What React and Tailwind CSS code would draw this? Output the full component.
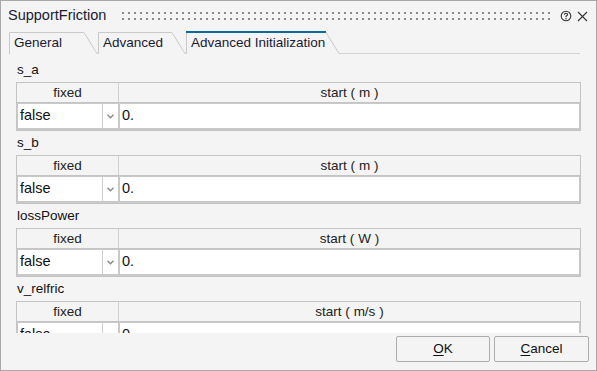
import React from 'react';

const sections = [
  { name: 's_a', unit: 'm', value: '0.' },
  { name: 's_b', unit: 'm', value: '0.' },
  { name: 'lossPower', unit: 'W', value: '0.' },
  { name: 'v_relfric', unit: 'm/s', value: '0.' },
];

function Tab({ label, width, active }) {
  // tab outline with slanted right edge
  return (
    <div className="relative h-[23px] shrink-0" style={{ width }}>
      <svg className="absolute inset-0" width={width} height="23" viewBox={`0 0 ${width} 23`}>
        <path
          d={`M0.5 23 L0.5 1.5 L${width - 14} 1.5 L${width - 1} 22.5 L${width} 22.5`}
          fill="#f4f4f4"
          stroke="#c9c9c9"
          strokeWidth="1"
        />
        {active && <line x1="0" y1="1" x2={width - 14} y2="1" stroke="#0b6c9b" strokeWidth="2" />}
      </svg>
      <span className="relative block pl-[5px] pt-[4px] text-[13.5px] leading-[16px] text-[#1a1a33]">{label}</span>
    </div>
  );
}

function ParamTable({ unit, value }) {
  return (
    <div className="border border-[#c4c4c4] bg-[#f4f4f4]">
      <div className="flex h-[19px] text-[13.5px] leading-[19px] text-[#222]">
        <div className="w-[102px] border-r border-[#d0d0d0] text-center">fixed</div>
        <div className="flex-1 text-center">start ( {unit} )</div>
      </div>
      <div className="flex h-[28px] gap-[2px] border-t border-[#c4c4c4] bg-[#c9c9c9] p-[1px] pb-[2px] text-[14.5px]">
        <div className="flex w-[100px] items-center bg-white">
          <span className="flex-1 pl-[2px] text-[#111]">false</span>
          <div className="flex h-full w-[16px] items-center justify-center border-l border-[#cfcfcf]">
            <svg width="7" height="5" viewBox="0 0 7 5">
              <path d="M0.5 0.8 L3.5 3.8 L6.5 0.8" fill="none" stroke="#888" strokeWidth="1.4" />
            </svg>
          </div>
        </div>
        <div className="flex flex-1 items-center bg-white pl-[2px] text-[#111]">{value}</div>
      </div>
    </div>
  );
}

export default function App() {
  return (
    <div
      className="flex h-[371px] w-[597px] flex-col overflow-hidden border border-[#a8a8a8] bg-[#f4f4f4]"
      style={{ fontFamily: '"Liberation Sans", Arial, sans-serif' }}
    >
      {/* title bar */}
      <div className="flex h-[30px] shrink-0 items-center pl-[7px] pr-[8px]">
        <span className="text-[14.5px] text-[#1a1a33]">SupportFriction</span>
        <div className="ml-[14px] mr-[8px] h-[12px] flex-1 bg-[radial-gradient(circle,#8c8c8c_0.8px,transparent_1.1px)] bg-[length:6px_6px]" />
        <svg width="12" height="12" viewBox="0 0 12 12" className="mr-[5px]">
          <circle cx="6" cy="6" r="4.8" fill="none" stroke="#333" strokeWidth="1.1" />
          <path d="M4.4 4.8 Q4.4 3.2 6 3.2 Q7.6 3.2 7.6 4.6 Q7.6 5.6 6 6.2 L6 7.2" fill="none" stroke="#333" strokeWidth="1.1" />
          <circle cx="6" cy="8.7" r="0.7" fill="#333" />
        </svg>
        <svg width="11" height="11" viewBox="0 0 11 11">
          <path d="M1 1 L10 10 M10 1 L1 10" stroke="#333" strokeWidth="1.1" />
        </svg>
      </div>

      {/* tabs */}
      <div className="flex h-[23px] shrink-0 items-end pl-[8px] pr-[16px]">
        <Tab label="General" width={89} />
        <Tab label="Advanced" width={88} />
        <Tab label="Advanced Initialization" width={154} active />
        <div className="h-[1px] flex-1 bg-[#d4d4d4]" />
      </div>

      {/* scrollable content */}
      <div className="h-[279px] shrink-0 overflow-hidden pl-[15px] pr-[15px] pt-[8px]">
        {sections.map((s) => (
          <div key={s.name} className="mb-[4px]">
            <div className="h-[20px] pl-[1px] text-[13.5px] leading-[16px] text-[#111]">{s.name}</div>
            <ParamTable unit={s.unit} value={s.value} />
          </div>
        ))}
      </div>

      {/* buttons */}
      <div className="flex flex-1 items-start justify-end gap-[4px] pr-[7px] pt-[3px]">
        <button className="h-[26px] w-[94px] rounded-[2px] border border-[#adadad] bg-[#f4f4f4] text-[13.5px] text-[#111]">
          <span className="underline underline-offset-2">O</span>K
        </button>
        <button className="h-[26px] w-[95px] rounded-[2px] border border-[#adadad] bg-[#f4f4f4] text-[13.5px] text-[#111]">
          <span className="underline underline-offset-2">C</span>ancel
        </button>
      </div>
    </div>
  );
}
